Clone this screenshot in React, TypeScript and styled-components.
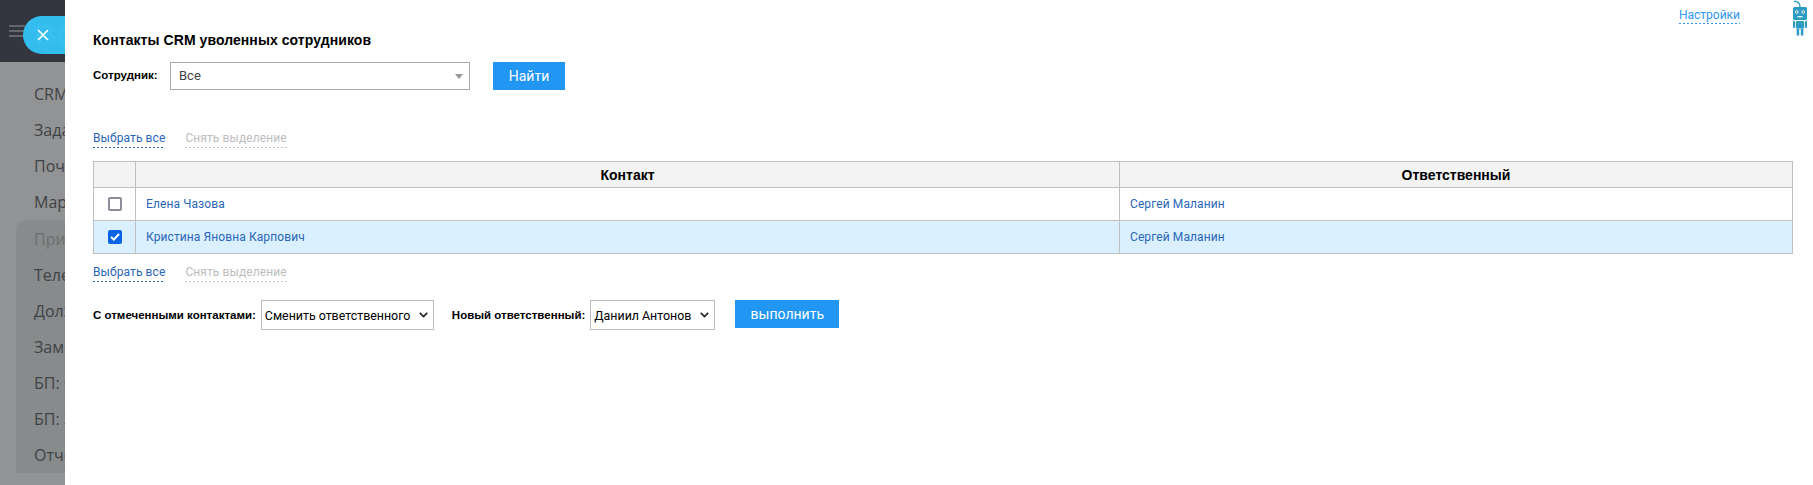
import styled, { createGlobalStyle } from "styled-components";

const GlobalStyle = createGlobalStyle`
  html, body {
    margin: 0;
    height: 100%;
    overflow: hidden;
    background: #fff;
  }
  #root {
    height: 100%;
  }
`;

const menuItems = [
  { label: "CRM" },
  { label: "Задачи" },
  { label: "Почта" },
  { label: "Маркетинг" },
];

const groupItems = [
  { label: "Приложения", muted: true },
  { label: "Телефония" },
  { label: "Должности" },
  { label: "Замена" },
  { label: "БП: Согласование" },
  { label: "БП: Заявка" },
  { label: "Отчеты" },
];

const contacts = [
  { id: 1, name: "Елена Чазова", owner: "Сергей Маланин", checked: false },
  { id: 2, name: "Кристина Яновна Карпович", owner: "Сергей Маланин", checked: true },
];

const chevron = encodeURIComponent(
  '<svg xmlns="http://www.w3.org/2000/svg" width="9" height="6" viewBox="0 0 9 6" fill="none" stroke="#222" stroke-width="1.7"><path d="M0.8 0.8 L4.5 4.5 L8.2 0.8"/></svg>'
);

const SelectionLinks = () => (
  <S_SelectionRow>
    <S_DottedLink>Выбрать все</S_DottedLink>
    <S_DottedLink $disabled>Снять выделение</S_DottedLink>
  </S_SelectionRow>
);

const RobotIcon = () => (
  <svg width="16" height="36" viewBox="0 0 16 36" fill="#2f9dc3">
    <path d="M2 1.2 C4.5 1.2 8 1.5 8 7" fill="none" stroke="#2f9dc3" strokeWidth="1.4" />
    <rect x="1" y="7" width="14" height="13" rx="1.5" />
    <circle cx="4.8" cy="12" r="1.8" fill="#e4f5fa" />
    <circle cx="11.2" cy="12" r="1.8" fill="#e4f5fa" />
    <circle cx="4.8" cy="12" r="0.7" fill="#1d4f63" />
    <circle cx="11.2" cy="12" r="0.7" fill="#1d4f63" />
    <rect x="5.5" y="16" width="5" height="1.4" fill="#e4f5fa" />
    <rect x="4" y="21" width="8" height="7.5" rx="1" />
    <rect x="1" y="21" width="2.2" height="7" rx="1" />
    <rect x="12.8" y="21" width="2.2" height="7" rx="1" />
    <rect x="4.6" y="28.5" width="2.6" height="7" />
    <rect x="8.8" y="28.5" width="2.6" height="7" />
  </svg>
);

const App = () => {
  return (
    <S_Page>
      <GlobalStyle />
      <S_Sidebar>
        <S_SidebarHeader>
          <S_Burger>
            <span />
            <span />
            <span />
          </S_Burger>
        </S_SidebarHeader>
        <S_Menu>
          {menuItems.map((item) => (
            <S_MenuItem key={item.label}>{item.label}</S_MenuItem>
          ))}
          <S_MenuGroup>
            {groupItems.map((item) => (
              <S_MenuItem key={item.label} $muted={item.muted}>
                {item.label}
              </S_MenuItem>
            ))}
          </S_MenuGroup>
        </S_Menu>
      </S_Sidebar>

      <S_CloseButton>
        <S_CloseGhost>BC</S_CloseGhost>
        <svg width="14" height="14" viewBox="0 0 14 14" fill="none" stroke="#fff" strokeWidth="1.7">
          <path d="M2 2 L12 12 M12 2 L2 12" />
        </svg>
      </S_CloseButton>

      <S_Slider>
        <S_TopBar>
          <S_SettingsLink>Настройки</S_SettingsLink>
          <RobotIcon />
        </S_TopBar>

        <S_Title>Контакты CRM уволенных сотрудников</S_Title>

        <S_FilterRow>
          <S_FilterLabel>Сотрудник:</S_FilterLabel>
          <S_Dropdown>
            Все
            <S_Caret />
          </S_Dropdown>
          <S_FindButton>Найти</S_FindButton>
        </S_FilterRow>

        <SelectionLinks />

        <S_Table>
          <colgroup>
            <col width="42" />
            <col width="984" />
            <col />
          </colgroup>
          <thead>
            <tr>
              <S_Th />
              <S_Th>Контакт</S_Th>
              <S_Th>Ответственный</S_Th>
            </tr>
          </thead>
          <tbody>
            {contacts.map((contact) => (
              <S_Row key={contact.id} $selected={contact.checked}>
                <S_CheckCell>
                  <S_Checkbox $checked={contact.checked}>
                    {contact.checked && (
                      <svg width="10" height="8" viewBox="0 0 10 8" fill="none" stroke="#fff" strokeWidth="2">
                        <path d="M1 4 L3.8 6.6 L9 1" />
                      </svg>
                    )}
                  </S_Checkbox>
                </S_CheckCell>
                <S_Td>{contact.name}</S_Td>
                <S_Td>{contact.owner}</S_Td>
              </S_Row>
            ))}
          </tbody>
        </S_Table>

        <SelectionLinks />

        <S_ActionRow>
          <S_ActionLabel>С отмеченными контактами:</S_ActionLabel>
          <S_Select $width={173} defaultValue="change">
            <option value="change">Сменить ответственного</option>
          </S_Select>
          <S_ActionLabel $gap>Новый ответственный:</S_ActionLabel>
          <S_Select $width={125} defaultValue="antonov">
            <option value="antonov">Даниил Антонов</option>
          </S_Select>
          <S_RunButton>выполнить</S_RunButton>
        </S_ActionRow>
      </S_Slider>
    </S_Page>
  );
};

export default App;

const S_Page = styled.div`
  position: relative;
  display: flex;
  width: 100%;
  height: 100%;
  overflow: hidden;
`;

const S_Sidebar = styled.aside`
  flex: 0 0 65px;
  overflow: hidden;
  background: #929394;
  font-family: "Open Sans", sans-serif;
`;

const S_SidebarHeader = styled.div`
  display: flex;
  align-items: center;
  height: 62px;
  padding-left: 9px;
  background: #33363f;
`;

const S_Burger = styled.div`
  display: flex;
  flex-direction: column;
  gap: 3px;
  width: 16px;
  span {
    height: 2px;
    background: #63666d;
  }
`;

const S_Menu = styled.div`
  display: flex;
  flex-direction: column;
  width: 240px;
  padding-top: 14px;
`;

const S_MenuItem = styled.div<{ $muted?: boolean }>`
  height: 36px;
  padding-left: 34px;
  font-size: 16px;
  line-height: 36px;
  white-space: nowrap;
  color: ${(p) => (p.$muted ? "#6c6f72" : "#3f4246")};
`;

const S_MenuGroup = styled.div`
  margin: 0 0 0 16px;
  padding-top: 1px;
  border-radius: 10px 0 0 0;
  background: #888b8c;
  ${S_MenuItem} {
    padding-left: 18px;
  }
`;

const S_CloseButton = styled.div`
  position: absolute;
  top: 16px;
  left: 23px;
  display: flex;
  align-items: center;
  width: 42px;
  height: 38px;
  padding-left: 13px;
  box-sizing: border-box;
  overflow: hidden;
  border-radius: 19px 0 0 19px;
  background: #33bdee;
`;

const S_CloseGhost = styled.span`
  position: absolute;
  top: 2px;
  left: 12px;
  font-family: "Liberation Sans", Arial, sans-serif;
  font-size: 30px;
  font-weight: 700;
  line-height: 34px;
  color: rgba(255, 255, 255, 0.05);
`;

const S_Slider = styled.main`
  flex: 1;
  min-width: 0;
  padding: 0 20px 0 28px;
  background: #fff;
  font-family: Roboto, sans-serif;
`;

const S_TopBar = styled.div`
  display: flex;
  justify-content: flex-end;
  align-items: flex-start;
  height: 33px;
  margin-right: -15px;
`;

const S_SettingsLink = styled.span`
  margin: 8px 52px 0 0;
  padding-bottom: 1px;
  background: repeating-linear-gradient(to right, #2f97f0 0 2px, transparent 2px 4px) bottom / 100% 1px no-repeat;
  font-size: 12px;
  line-height: 15px;
  color: #2f97f0;
`;

const S_Title = styled.h1`
  margin: 0;
  font-family: "Liberation Sans", Arial, sans-serif;
  font-size: 14px;
  font-weight: 700;
  line-height: 14px;
  letter-spacing: 0.07px;
  color: #000;
`;

const S_FilterRow = styled.div`
  display: flex;
  align-items: flex-start;
  margin-top: 15px;
`;

const S_FilterLabel = styled.label`
  width: 77px;
  padding-top: 6px;
  font-family: "Liberation Sans", Arial, sans-serif;
  font-size: 11.5px;
  font-weight: 700;
  line-height: 14px;
  color: #000;
`;

const S_Dropdown = styled.div`
  position: relative;
  width: 300px;
  height: 28px;
  padding-left: 8px;
  box-sizing: border-box;
  border: 1px solid #aaa;
  font-size: 13px;
  line-height: 26px;
  color: #444;
`;

const S_Caret = styled.span`
  position: absolute;
  top: 11px;
  right: 6px;
  border-top: 5px solid #999;
  border-left: 4px solid transparent;
  border-right: 4px solid transparent;
`;

const S_FindButton = styled.div`
  width: 72px;
  height: 28px;
  margin-left: 23px;
  background: #2196f3;
  font-size: 14px;
  line-height: 28px;
  text-align: center;
  color: #fff;
`;

const S_SelectionRow = styled.div`
  display: flex;
  gap: 20px;
  height: 17px;
  margin-top: 41px;
  & + table {
    margin-top: 13px;
  }
  table + & {
    margin-top: 11px;
  }
`;

const S_DottedLink = styled.span<{ $disabled?: boolean }>`
  height: 17px;
  background: repeating-linear-gradient(
      to right,
      ${(p) => (p.$disabled ? "#c4c4c4" : "#2a66b8")} 0 2px,
      transparent 2px 4px
    )
    bottom / 100% 1px no-repeat;
  font-size: 12px;
  line-height: 15px;
  letter-spacing: 0.1px;
  color: ${(p) => (p.$disabled ? "#bdbdbd" : "#2a66b8")};
`;

const S_Table = styled.table`
  width: 100%;
  table-layout: fixed;
  border-collapse: collapse;
`;

const S_Th = styled.th`
  height: 25px;
  padding: 0;
  border: 1px solid #bfbfbf;
  background: #f3f3f3;
  font-family: "Liberation Sans", Arial, sans-serif;
  font-size: 14px;
  font-weight: 700;
  color: #000;
`;

const S_Row = styled.tr<{ $selected: boolean }>`
  height: 33px;
  background: ${(p) => (p.$selected ? "#daf0fe" : "#fff")};
`;

const S_Td = styled.td`
  padding: 0 10px;
  border: 1px solid #bfbfbf;
  font-size: 12px;
  letter-spacing: 0.1px;
  color: #2a66b8;
`;

const S_CheckCell = styled.td`
  padding: 0;
  border: 1px solid #bfbfbf;
`;

const S_Checkbox = styled.div<{ $checked: boolean }>`
  display: flex;
  align-items: center;
  justify-content: center;
  width: 14px;
  height: 14px;
  margin: 0 auto;
  box-sizing: border-box;
  border: 2px solid ${(p) => (p.$checked ? "#0b63e5" : "#8f8d9b")};
  border-radius: 2px;
  background: ${(p) => (p.$checked ? "#0b63e5" : "#fff")};
`;

const S_ActionRow = styled.div`
  display: flex;
  align-items: center;
  margin-top: 18px;
`;

const S_ActionLabel = styled.label<{ $gap?: boolean }>`
  margin: 0 5px 0 ${(p) => (p.$gap ? "18px" : "0")};
  font-family: "Liberation Sans", Arial, sans-serif;
  font-size: 11.5px;
  font-weight: 700;
  color: #000;
`;

const S_Select = styled.select<{ $width: number }>`
  width: ${(p) => p.$width}px;
  height: 30px;
  padding: 0 16px 0 3px;
  border: 1px solid #bdbdbd;
  border-radius: 0;
  appearance: none;
  background: #fff url("data:image/svg+xml,${chevron}") no-repeat right 5px center;
  font-family: Roboto, sans-serif;
  font-size: 12.4px;
  color: #000;
`;

const S_RunButton = styled.div`
  width: 104px;
  height: 28px;
  margin: -2px 0 0 20px;
  background: #2196f3;
  font-size: 14px;
  line-height: 28px;
  text-align: center;
  color: #fff;
`;
